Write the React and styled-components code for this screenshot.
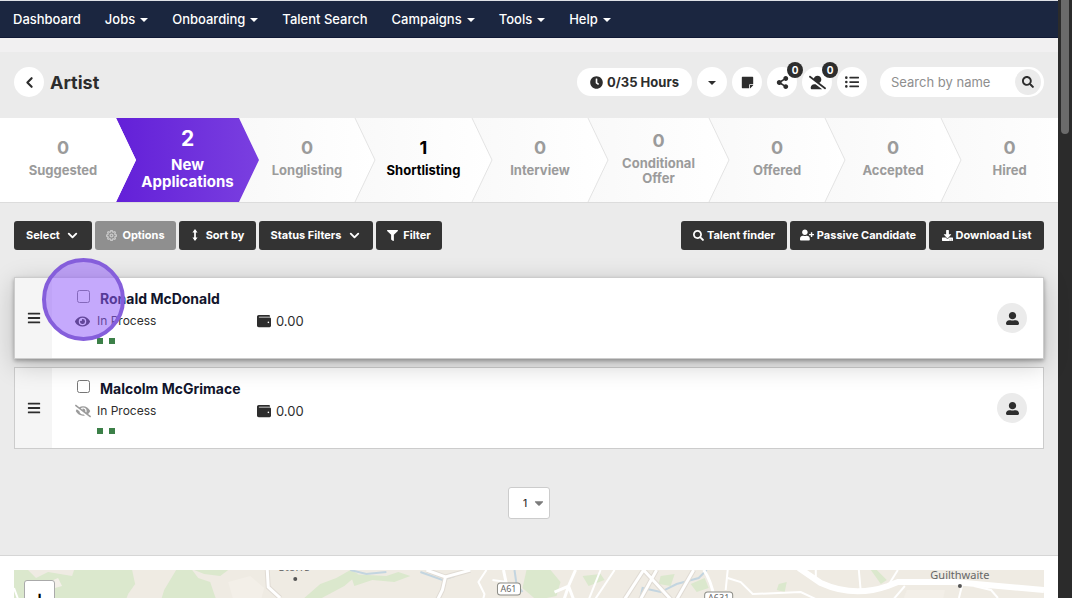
import React from 'react';
import styled, { createGlobalStyle, css } from 'styled-components';
import {
  FaCaretDown,
  FaClock,
  FaStickyNote,
  FaShareAlt,
  FaUserAltSlash,
  FaListUl,
  FaSearch,
  FaFilter,
  FaUserPlus,
  FaDownload,
  FaEye,
  FaEyeSlash,
  FaWallet,
  FaUserAlt,
  FaBars,
} from 'react-icons/fa';
import { FiChevronDown, FiChevronLeft, FiSettings } from 'react-icons/fi';

const menu = [
  { label: 'Dashboard' },
  { label: 'Jobs', hasMenu: true },
  { label: 'Onboarding', hasMenu: true },
  { label: 'Talent Search' },
  { label: 'Campaigns', hasMenu: true },
  { label: 'Tools', hasMenu: true },
  { label: 'Help', hasMenu: true },
];

const stages = [
  { label: 'Suggested', count: 0 },
  { label: 'New Applications', count: 2, active: true },
  { label: 'Longlisting', count: 0 },
  { label: 'Shortlisting', count: 1 },
  { label: 'Interview', count: 0 },
  { label: 'Conditional Offer', count: 0 },
  { label: 'Offered', count: 0 },
  { label: 'Accepted', count: 0 },
  { label: 'Hired', count: 0 },
];

const candidates = [
  { id: 1, name: 'Ronald McDonald', seen: true, raised: true },
  { id: 2, name: 'Malcolm McGrimace', seen: false, raised: false },
];

export default function App() {
  return (
    <>
      <GlobalStyle />
      <Window>
        <Page>
          <Nav>
            {menu.map((item) => (
              <NavLink key={item.label} href="#">
                {item.label}
                {item.hasMenu && <Caret />}
              </NavLink>
            ))}
          </Nav>

          <Header>
            <RoundButton aria-label="Back">
              <FiChevronLeft size={17} strokeWidth={3} />
            </RoundButton>
            <Title>Artist</Title>
            <Actions>
              <Hours>
                <FaClock size={13} />
                0/35 Hours
              </Hours>
              <RoundButton aria-label="More">
                <Caret />
              </RoundButton>
              <RoundButton aria-label="Notes">
                <FaStickyNote size={13} />
              </RoundButton>
              <RoundButton aria-label="Share">
                <FaShareAlt size={13} />
                <Badge>0</Badge>
              </RoundButton>
              <RoundButton aria-label="Rejected">
                <FaUserAltSlash size={17} />
                <Badge>0</Badge>
              </RoundButton>
              <RoundButton aria-label="List">
                <FaListUl size={14} />
              </RoundButton>
            </Actions>
            <Search>
              <SearchInput aria-label="Search by name" placeholder="Search by name" />
              <SearchButton aria-label="Search">
                <FaSearch size={12} />
              </SearchButton>
            </Search>
          </Header>

          <Stages>
            {stages.map((stage, index) => (
              <Stage
                key={stage.label}
                href="#"
                $order={stages.length - index}
                $first={index === 0}
                $active={stage.active}
                $filled={stage.count > 0}
              >
                <StageCount $active={stage.active}>{stage.count}</StageCount>
                <StageLabel $active={stage.active}>{stage.label}</StageLabel>
                {index > 1 && index < stages.length - 1 && (
                  <Chevron viewBox="0 0 22 84">
                    <path d="M1 0 L21 42 L1 84" />
                  </Chevron>
                )}
              </Stage>
            ))}
          </Stages>

          <Toolbar>
            <ToolGroup>
              <ToolButton $width={78}>
                Select <FiChevronDown size={15} strokeWidth={3} />
              </ToolButton>
              <ToolButton $width={81} disabled>
                <FiSettings size={11} strokeWidth={3} opacity={0.5} /> Options
              </ToolButton>
              <ToolButton $width={77}>
                <SortIcon viewBox="0 0 8 14">
                  <path d="M4 2v10" />
                  <path d="M1 4l3-4 3 4zM1 10l3 4 3-4z" fill="currentColor" stroke="none" />
                </SortIcon>
                Sort by
              </ToolButton>
              <ToolButton $width={114}>
                Status Filters <FiChevronDown size={15} strokeWidth={3} />
              </ToolButton>
              <ToolButton $width={66}>
                <FaFilter size={11} /> Filter
              </ToolButton>
            </ToolGroup>
            <ToolGroup>
              <ToolButton $width={106} $tight>
                <FaSearch size={11} /> Talent finder
              </ToolButton>
              <ToolButton $width={136} $tight>
                <FaUserPlus size={14} /> Passive Candidate
              </ToolButton>
              <ToolButton $width={115} $tight>
                <FaDownload size={11} /> Download List
              </ToolButton>
            </ToolGroup>
          </Toolbar>

          <List>
            {candidates.map((candidate) => (
              <Card key={candidate.id} $raised={candidate.raised}>
                <Handle>
                  <FaBars size={14} />
                </Handle>
                <Details>
                  <NameRow>
                    <Checkbox id={`candidate-${candidate.id}`} type="checkbox" />
                    <Name htmlFor={`candidate-${candidate.id}`}>
                      {candidate.name}
                    </Name>
                  </NameRow>
                  <StatusRow>
                    <Visibility $seen={candidate.seen}>
                      {candidate.seen ? <FaEye size={15} /> : <FaEyeSlash size={16} />}
                    </Visibility>
                    <Status>In Process</Status>
                    <Amount>
                      <FaWallet size={14} /> 0.00
                    </Amount>
                  </StatusRow>
                  <Marks>
                    <Mark />
                    <Mark />
                  </Marks>
                </Details>
                <Avatar>
                  <FaUserAlt size={13} />
                </Avatar>
              </Card>
            ))}
            <Highlight />
          </List>

          <Pagination>
            <PageSelect aria-label="Page" defaultValue="1">
              <option>1</option>
            </PageSelect>
            <FaCaretDown size={14} />
          </Pagination>

          <MapPanel>
            <MapView>
              <RoadMap />
              <ZoomIn aria-label="Zoom in">+</ZoomIn>
            </MapView>
          </MapPanel>
        </Page>
        <Scrollbar>
          <Thumb />
        </Scrollbar>
      </Window>
    </>
  );
}

function RoadMap() {
  return (
    <MapSvg viewBox="0 0 1029 40" preserveAspectRatio="xMidYMin slice">
      <rect width="1029" height="40" fill="#efebe3" />
      <g fill="#dbe8cd">
        <path d="M0 0H14L22 8L34 2L58 6L60 0H118L121 14L114 24L108 40H0Z" />
        <path d="M162 0H178L184 8L196 12L200 24L206 40H144L150 20Z" />
        <path d="M180 0H214L206 6L190 4Z" />
        <path d="M290 28L306 14L322 8L336 0L344 4L330 16L300 32Z" />
        <path d="M336 4L372 6L384 2L396 6L380 12L358 10L340 16Z" />
        <path d="M512 0H536L546 12L542 26L522 30L508 18Z" />
        <path d="M568 6L586 4L590 10L574 16Z" />
        <path d="M646 6L660 4L656 16L644 14Z" />
        <path d="M676 14L690 8L694 18L682 22Z" />
        <path d="M856 0H862L872 10L866 14Z" />
        <path d="M764 14L772 12L770 22L762 20Z" />
      </g>
      <g fill="#f3efe8">
        <path d="M30 14L44 8L48 16L34 20Z" />
        <path d="M214 12L236 6L250 18L244 40H222Z" />
        <path d="M892 20L930 20L926 40H884Z" />
      </g>
      <g fill="none" stroke="#c3d5e0" strokeWidth="2">
        <path d="M336 0L352 4L372 2" />
        <path d="M406 2L428 10L440 6" />
        <path d="M500 0L502 14L508 22" />
        <path d="M623 40L628 18L646 22L662 14L684 8L692 0" />
      </g>
      <g fill="none" stroke="#e0dbd4" strokeWidth="5">
        <path d="M253 0L254 17L266 28" />
        <path d="M412 0L431 7L456 0M431 7L428 20L418 40" />
        <path d="M603 40L629 0M629 0L666 40M656 40L679 0M620 40L642 0" />
      </g>
      <g fill="none" stroke="#ffffff" strokeWidth="3">
        <path d="M253 0L254 17L266 28" />
        <path d="M412 0L431 7L456 0M431 7L428 20L418 40" />
        <path d="M603 40L629 0M629 0L666 40M656 40L679 0M620 40L642 0" />
        <path d="M689 0Q699 14 701 40M489 0L494 24" />
        <path d="M546 40L554 16L561 0M554 16L563 40M554 16L540 22" />
      </g>
      <g fill="none" stroke="#ffffff" strokeWidth="2">
        <path d="M0 18L8 40M472 0L464 12L470 24L466 40M478 10L492 12" />
        <path d="M586 0L570 40M600 0L580 30M713 0L711 20" />
        <path d="M713 8L726 12L738 24L786 22L803 30" />
        <path d="M801 0V7M844 0L846 22M883 0L873 16M890 16L878 30" />
        <path d="M947 16L944 28M959 16L976 20L983 28" />
      </g>
      <path
        d="M784 -2L806 13Q839 28 873 16L883 12H939L1029 20"
        fill="none"
        stroke="#ffffff"
        strokeWidth="6"
      />
      <g fill="#ffffff" stroke="#8c8c86">
        <rect x="483" y="13" width="23" height="12" rx="3" />
        <rect x="690" y="22" width="28" height="12" rx="3" />
      </g>
      <MapText x="494" y="22">A61</MapText>
      <MapText x="704" y="31">A631</MapText>
      <MapText $town x="280" y="1">Storrs</MapText>
      <MapText $town x="945" y="9">Guilthwaite</MapText>
      <circle cx="281" cy="9" r="2" fill="#555555" />
      <circle cx="945" cy="16" r="2" fill="#555555" />
    </MapSvg>
  );
}

const GlobalStyle = createGlobalStyle`
  * {
    box-sizing: border-box;
  }

  body {
    margin: 0;
    font-family: Inter, 'Liberation Sans', sans-serif;
    color: #2d2d2d;
    background: #ebebeb;
  }

  button,
  input,
  select {
    font-family: inherit;
    color: inherit;
  }

  button {
    padding: 0;
    border: 0;
    cursor: pointer;
  }

  a {
    text-decoration: none;
  }
`;

const Window = styled.div`
  display: flex;
  height: 100vh;
  overflow: hidden;
`;

const Page = styled.main`
  flex: 1;
  min-width: 0;
`;

const Scrollbar = styled.div`
  width: 14px;
  padding: 0 3px;
  background: #2b2b2b;
`;

const Thumb = styled.div`
  height: 134px;
  border-radius: 0 0 4px 4px;
  background: #6b6b6b;
`;

const Nav = styled.nav`
  display: flex;
  align-items: center;
  gap: 24px;
  height: 38px;
  padding: 0 13px;
  border-top: 1px solid #dfe1e6;
  border-bottom: 1px solid #101935;
  background: #1b2640;
`;

const NavLink = styled.a`
  display: flex;
  align-items: center;
  gap: 5px;
  font-size: 13px;
  font-weight: 500;
  color: #ffffff;
`;

const Caret = styled.span`
  margin-top: 2px;
  border: 4px solid transparent;
  border-top-color: currentColor;
  border-bottom: 0;
`;

const Header = styled.header`
  display: flex;
  align-items: center;
  height: 80px;
  padding: 0 14px 6px;
  border-top: 14px solid #f1f0f1;
  background: #ebebeb;
`;

const RoundButton = styled.button`
  position: relative;
  display: flex;
  align-items: center;
  justify-content: center;
  width: 30px;
  height: 30px;
  border-radius: 50%;
  background: #ffffff;
`;

const Title = styled.h1`
  flex: 1;
  margin: 0 0 0 6px;
  font-size: 18px;
  font-weight: 700;
`;

const Actions = styled.div`
  display: flex;
  align-items: center;
  gap: 5px;
  margin-right: 13px;
`;

const Hours = styled.div`
  display: flex;
  align-items: center;
  justify-content: center;
  gap: 4px;
  width: 115px;
  height: 28px;
  border-radius: 14px;
  font-size: 13px;
  font-weight: 700;
  background: #ffffff;
`;

const Badge = styled.span`
  position: absolute;
  top: -5px;
  right: -6px;
  width: 16px;
  height: 16px;
  border-radius: 50%;
  font-size: 10px;
  font-weight: 700;
  line-height: 16px;
  text-align: center;
  color: #ffffff;
  background: #2d2d2d;
`;

const Search = styled.div`
  display: flex;
  align-items: center;
  width: 164px;
  height: 30px;
  padding: 0 3px 0 11px;
  border-radius: 15px;
  background: #ffffff;
`;

const SearchInput = styled.input`
  flex: 1;
  min-width: 0;
  padding: 0;
  border: 0;
  outline: 0;
  font-size: 13px;
  background: none;

  &::placeholder {
    color: #8e8e8e;
  }
`;

const SearchButton = styled.button`
  display: flex;
  align-items: center;
  justify-content: center;
  width: 26px;
  height: 26px;
  border-radius: 50%;
  background: #ebebeb;
`;

const Stages = styled.div`
  display: grid;
  grid-template-columns: 116fr 123fr 116fr 117fr 116fr 121fr 116fr 116fr 117fr;
  height: 85px;
  border-bottom: 1px solid #dcdcdc;
  overflow: hidden;
  background: #ffffff;
`;

const Stage = styled.a`
  position: relative;
  z-index: ${({ $order }) => $order};
  display: flex;
  flex-direction: column;
  align-items: center;
  justify-content: center;
  min-width: 0;
  padding: 0 0 9px ${({ $first }) => ($first ? '10px' : '20px')};
  color: ${({ $filled }) => ($filled ? '#000000' : '#9b9b9b')};

  &::before {
    content: '';
    position: absolute;
    z-index: -1;
    inset: 0 -20px 0 0;
    background: linear-gradient(90deg, #f9f9f9, #ffffff);
    clip-path: polygon(
      0 0,
      calc(100% - 20px) 0,
      100% 50%,
      calc(100% - 20px) 100%,
      0 100%,
      20px 50%
    );
  }

  ${({ $first }) =>
    $first &&
    css`
      &::before {
        background: #ffffff;
      }
    `}

  ${({ $active }) =>
    $active &&
    css`
      color: #ffffff;

      &::before {
        background: linear-gradient(90deg, #6320d8, #7a3fe0);
      }
    `}
`;

const StageCount = styled.span`
  font-size: ${({ $active }) => ($active ? '21px' : '18px')};
  font-weight: 700;
  line-height: ${({ $active }) => ($active ? '34px' : '30px')};
`;

const StageLabel = styled.span`
  font-size: ${({ $active }) => ($active ? '15px' : '13px')};
  font-weight: 700;
  line-height: ${({ $active }) => ($active ? '17px' : '15px')};
  text-align: center;
`;

const Chevron = styled.svg`
  position: absolute;
  top: 0;
  right: -21px;
  width: 22px;
  height: 84px;
  fill: none;
  stroke: #e3e3e3;
`;

const Toolbar = styled.div`
  display: flex;
  justify-content: space-between;
  padding: 18px 14px 27px;
`;

const ToolGroup = styled.div`
  display: flex;
  gap: 3px;
`;

const ToolButton = styled.button`
  display: flex;
  align-items: center;
  justify-content: center;
  gap: ${({ $tight }) => ($tight ? '3px' : '5px')};
  width: ${({ $width }) => $width}px;
  height: 29px;
  padding-bottom: 1px;
  border-radius: 3px;
  font-size: 11px;
  font-weight: 700;
  white-space: nowrap;
  color: #ffffff;
  background: #333333;

  &:disabled {
    background: #8f8f8f;
  }
`;

const SortIcon = styled.svg`
  width: 8px;
  height: 12px;
  margin-right: 2px;
  fill: none;
  stroke: currentColor;
  stroke-width: 2;
`;

const List = styled.div`
  position: relative;
  display: flex;
  flex-direction: column;
  gap: 8px;
  padding: 0 14px;
`;

const Card = styled.article`
  display: flex;
  align-items: center;
  height: 82px;
  padding-right: 16px;
  border: 1px solid #cccccc;
  background: #ffffff;

  ${({ $raised }) =>
    $raised &&
    css`
      position: relative;
      z-index: 1;
      box-shadow: 0 2px 4px rgba(0, 0, 0, 0.3), 0 6px 24px rgba(0, 0, 0, 0.2);
    `}
`;

const Handle = styled.div`
  display: flex;
  align-items: center;
  justify-content: center;
  align-self: stretch;
  width: 37px;
  background: #f5f5f5;
`;

const Details = styled.div`
  display: flex;
  flex: 1;
  flex-direction: column;
  gap: 4px;
  padding: 0 0 2px 23px;
`;

const NameRow = styled.div`
  display: flex;
  align-items: center;
  gap: 10px;
`;

const Checkbox = styled.input`
  width: 13px;
  height: 13px;
  margin: 0 0 5px 2px;
`;

const Name = styled.label`
  font-size: 14px;
  font-weight: 700;
  line-height: 18px;
  color: #12152c;
`;

const StatusRow = styled.div`
  display: flex;
  align-items: center;
  font-size: 13px;
  line-height: 18px;
`;

const Visibility = styled.span`
  display: flex;
  width: 22px;
  color: ${({ $seen }) => ($seen ? '#2d2d2d' : '#9b9b9b')};
`;

const Status = styled.span`
  width: 160px;
  font-size: 12px;
`;

const Amount = styled.span`
  display: flex;
  align-items: center;
  gap: 5px;
`;

const Marks = styled.div`
  display: flex;
  gap: 6px;
  padding: 4px 0 0 22px;
`;

const Mark = styled.span`
  width: 6px;
  height: 6px;
  background: #3c8048;
`;

const Avatar = styled.div`
  display: flex;
  align-items: center;
  justify-content: center;
  width: 30px;
  height: 30px;
  border-radius: 50%;
  background: #ebebeb;
`;

const Highlight = styled.div`
  position: absolute;
  z-index: 2;
  top: -19px;
  left: 42px;
  width: 83px;
  height: 83px;
  border: 4px solid #855edb;
  border-radius: 50%;
  background: rgba(146, 92, 250, 0.53);
  pointer-events: none;
`;

const Pagination = styled.div`
  display: grid;
  justify-content: center;
  align-items: center;
  padding: 38px 0 36px;
  border-bottom: 1px solid #d6d6d6;

  > * {
    grid-area: 1 / 1;
  }

  svg {
    justify-self: end;
    margin-right: 4px;
    color: #7b7b7b;
    pointer-events: none;
  }
`;

const PageSelect = styled.select`
  width: 42px;
  height: 32px;
  padding: 0 14px;
  border: 1px solid #cccccc;
  border-radius: 3px;
  appearance: none;
  font-size: 10px;
  font-weight: 500;
  background: #ffffff;
`;

const MapPanel = styled.section`
  height: 100px;
  padding: 14px 14px 0;
  background: #ffffff;
`;

const MapView = styled.div`
  position: relative;
  height: 40px;
`;

const MapSvg = styled.svg`
  display: block;
  width: 100%;
  height: 100%;
`;

const MapText = styled.text`
  font-family: 'Noto Sans', sans-serif;
  font-size: ${({ $town }) => ($town ? '11px' : '9px')};
  text-anchor: middle;
  fill: #666666;
`;

const ZoomIn = styled.button`
  position: absolute;
  top: 10px;
  left: 10px;
  width: 31px;
  height: 34px;
  border: 1px solid #aaaaaa;
  border-radius: 3px;
  font-size: 22px;
  font-weight: 500;
  color: #000000;
  background: #ffffff;
`;
